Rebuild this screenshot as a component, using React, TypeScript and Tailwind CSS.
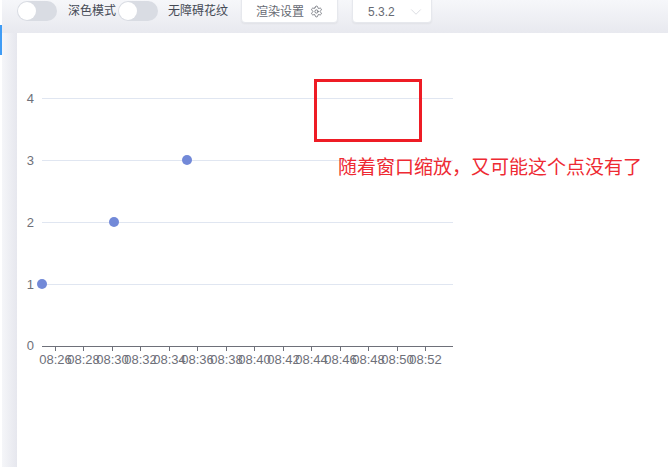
import { ChevronDown, Settings } from 'lucide-react';

const font = { fontFamily: '"Liberation Sans", "Noto Sans CJK SC", sans-serif' };

const ticks = [
  { x: 55.5, label: '08:26' },
  { x: 83.5, label: '08:28' },
  { x: 112.5, label: '08:30' },
  { x: 140.5, label: '08:32' },
  { x: 169.5, label: '08:34' },
  { x: 197.5, label: '08:36' },
  { x: 226.5, label: '08:38' },
  { x: 254.5, label: '08:40' },
  { x: 283.5, label: '08:42' },
  { x: 311.5, label: '08:44' },
  { x: 340.5, label: '08:46' },
  { x: 368.5, label: '08:48' },
  { x: 397.5, label: '08:50' },
  { x: 425.5, label: '08:52' },
];

const rows = [
  { y: 98.5, label: '4' },
  { y: 160.5, label: '3' },
  { y: 222.5, label: '2' },
  { y: 284.5, label: '1' },
];

const points = [
  { x: 42, y: 284 },
  { x: 114, y: 222 },
  { x: 187, y: 160 },
];

function Toggle() {
  return (
    <span className="flex h-[20px] w-[40px] shrink-0 items-center rounded-full bg-[#d9dce3] pl-[1px]">
      <span className="h-[18px] w-[18px] rounded-full bg-white" />
    </span>
  );
}

// viewBox keeps the chart in page coordinates, the card starts at 17,33
function Chart() {
  return (
    <svg width="460" height="345" viewBox="17 33 460 345" className="block" style={font}>
      {rows.map((row) => (
        <g key={row.label}>
          <line x1="42" x2="453" y1={row.y} y2={row.y} stroke="#e0e6f1" />
          <text x="34" y={row.y + 4.5} textAnchor="end" fontSize="13" fill="#6e7079">
            {row.label}
          </text>
        </g>
      ))}
      <text x="34" y="350" textAnchor="end" fontSize="13" fill="#6e7079">
        0
      </text>
      <line x1="42" x2="453" y1="346.5" y2="346.5" stroke="#6e7079" />
      {ticks.map((tick) => (
        <g key={tick.label}>
          <line x1={tick.x} x2={tick.x} y1="346" y2="351" stroke="#6e7079" />
          <text x={tick.x} y="364" textAnchor="middle" fontSize="13" fill="#6e7079">
            {tick.label}
          </text>
        </g>
      ))}
      {points.map((point) => (
        <circle key={point.x} cx={point.x} cy={point.y} r="5" fill="#7289d8" />
      ))}
    </svg>
  );
}

export default function App() {
  return (
    <div className="flex h-[467px] w-[668px] overflow-hidden bg-white text-[12px] text-[#454a55]" style={font}>
      <div className="w-[2px] shrink-0 pt-[25px]">
        <div className="h-[30px] bg-[#3f9cf5]" />
      </div>

      <div className="flex min-w-0 flex-1 flex-col">
        <div className="flex h-[33px] shrink-0 items-start bg-gradient-to-b from-[#f6f7fa] to-[#e8e9ef] pl-[15px]">
          <div className="mt-[1px] flex items-center">
            <Toggle />
            <span className="ml-[11px] w-[50px] leading-[20px]">深色模式</span>
            <Toggle />
            <span className="ml-[10px] w-[73px] leading-[20px]">无障碍花纹</span>
          </div>
          <div className="-mt-[4px] flex h-[27px] w-[97px] items-center justify-center gap-[6px] rounded-[4px] border border-[#e6e8ed] bg-white pt-[4px] text-[#666a73] shadow-[0_1px_2px_rgba(0,0,0,0.05)]">
            <span>渲染设置</span>
            <Settings size={13} strokeWidth={1.5} className="text-[#666a73]" />
          </div>
          <div className="-mt-[4px] ml-[14px] flex h-[27px] w-[80px] items-center rounded-[4px] border border-[#e6e8ed] bg-white pl-[15px] pr-[6px] pt-[4px] text-[#666a73] shadow-[0_1px_2px_rgba(0,0,0,0.05)]">
            <span className="flex-1">5.3.2</span>
            <ChevronDown size={18} strokeWidth={1} className="text-[#cfd1d8]" />
          </div>
        </div>

        <div className="flex min-h-0 flex-1">
          <div className="w-[15px] shrink-0 bg-gradient-to-r from-[#f5f6f9] to-[#e6e7ee]" />
          <div className="relative min-w-0 flex-1 rounded-tl-[4px] bg-white">
            <Chart />
            <div className="absolute left-[297px] top-[46px] h-[63px] w-[108px] border-[3px] border-[#ee1c25]" />
            <span className="absolute left-[321px] top-[123px] text-[19px] leading-[24px] text-[#ee2a33]">
              随着窗口缩放，又可能这个点没有了
            </span>
          </div>
        </div>
      </div>
    </div>
  );
}
